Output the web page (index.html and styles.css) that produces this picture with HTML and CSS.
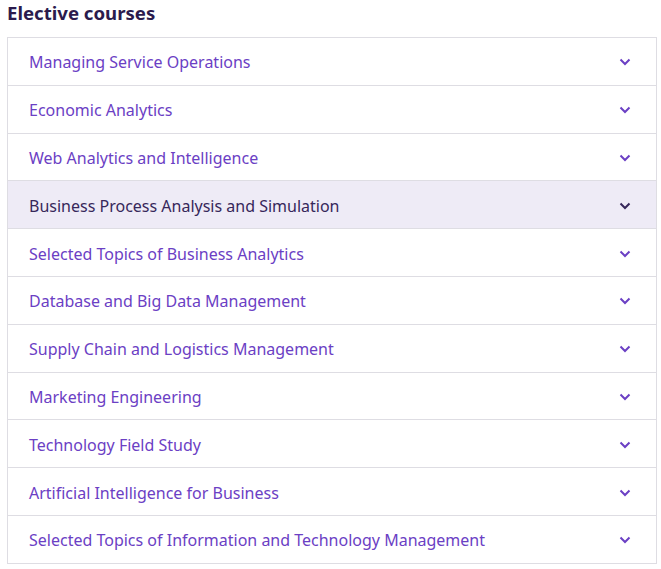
FILE: index.html
```html
<!DOCTYPE html>
<html lang="en">
<head>
<meta charset="utf-8">
<title>Elective courses</title>
<link rel="stylesheet" href="styles.css">
</head>
<body>
<div class="page">
  <h2 class="title">Elective courses</h2>
  <ul class="accordion">
    <li class="item"><span class="label">Managing Service Operations</span><svg class="chev" viewBox="0 0 12 8"><path d="M1.5 1.5 6 6 10.5 1.5"/></svg></li>
    <li class="item"><span class="label">Economic Analytics</span><svg class="chev" viewBox="0 0 12 8"><path d="M1.5 1.5 6 6 10.5 1.5"/></svg></li>
    <li class="item"><span class="label">Web Analytics and Intelligence</span><svg class="chev" viewBox="0 0 12 8"><path d="M1.5 1.5 6 6 10.5 1.5"/></svg></li>
    <li class="item active"><span class="label">Business Process Analysis and Simulation</span><svg class="chev" viewBox="0 0 12 8"><path d="M1.5 1.5 6 6 10.5 1.5"/></svg></li>
    <li class="item"><span class="label">Selected Topics of Business Analytics</span><svg class="chev" viewBox="0 0 12 8"><path d="M1.5 1.5 6 6 10.5 1.5"/></svg></li>
    <li class="item"><span class="label">Database and Big Data Management</span><svg class="chev" viewBox="0 0 12 8"><path d="M1.5 1.5 6 6 10.5 1.5"/></svg></li>
    <li class="item"><span class="label">Supply Chain and Logistics Management</span><svg class="chev" viewBox="0 0 12 8"><path d="M1.5 1.5 6 6 10.5 1.5"/></svg></li>
    <li class="item"><span class="label">Marketing Engineering</span><svg class="chev" viewBox="0 0 12 8"><path d="M1.5 1.5 6 6 10.5 1.5"/></svg></li>
    <li class="item"><span class="label">Technology Field Study</span><svg class="chev" viewBox="0 0 12 8"><path d="M1.5 1.5 6 6 10.5 1.5"/></svg></li>
    <li class="item"><span class="label">Artificial Intelligence for Business</span><svg class="chev" viewBox="0 0 12 8"><path d="M1.5 1.5 6 6 10.5 1.5"/></svg></li>
    <li class="item"><span class="label">Selected Topics of Information and Technology Management</span><svg class="chev" viewBox="0 0 12 8"><path d="M1.5 1.5 6 6 10.5 1.5"/></svg></li>
  </ul>
</div>
</body>
</html>
```
FILE: styles.css
```css
html, body {
  margin: 0;
  padding: 0;
  background: #ffffff;
}
body {
  font-family: "Noto Sans", "Open Sans", sans-serif;
}
.page {
  width: 650px;
  margin-left: 7px;
}
.title {
  margin: 0;
  height: 37px;
  font-size: 18.6px;
  line-height: 25px;
  font-weight: 700;
  color: #2b1b4d;
}
.accordion {
  list-style: none;
  margin: 0;
  padding: 0;
  border: 1px solid #dedde3;
  border-bottom: none;
}
.item {
  display: flex;
  align-items: center;
  justify-content: space-between;
  height: 44.8px;
  padding: 2px 25px 0 21px;
  border-bottom: 1px solid #dedde3;
  color: #6b40c4;
  font-size: 16px;
}
.item.active {
  background: #eeebf6;
  color: #36275a;
}
.chev {
  width: 12px;
  height: 8px;
  fill: none;
  stroke: currentColor;
  stroke-width: 2;
}
```
